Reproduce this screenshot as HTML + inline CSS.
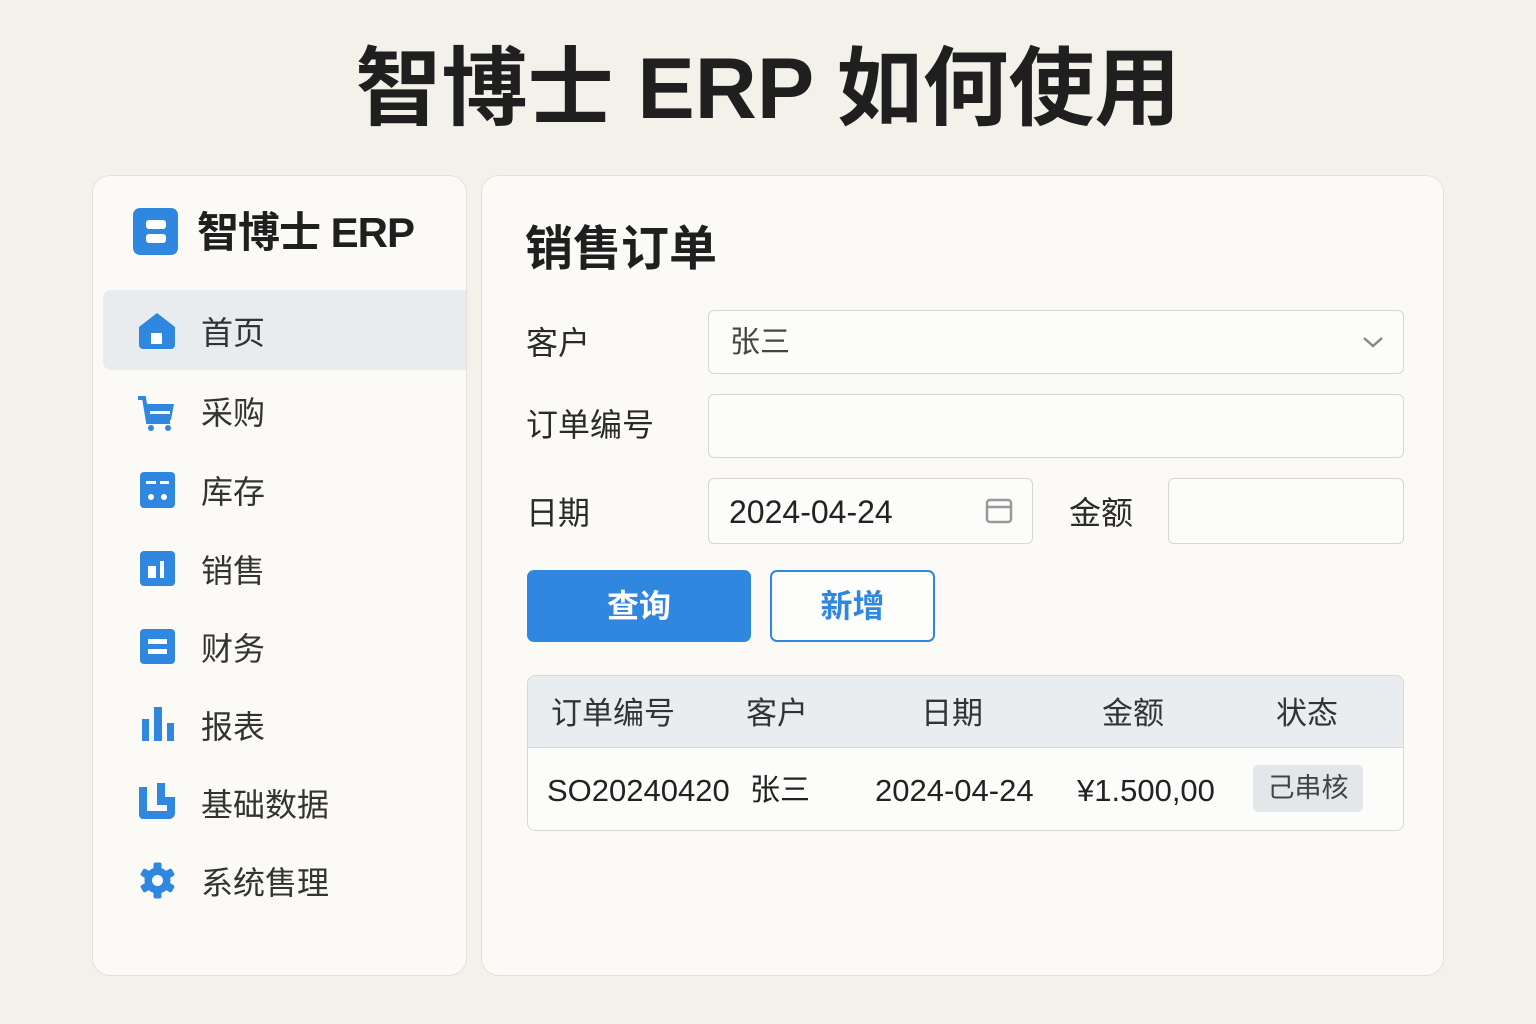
<!DOCTYPE html>
<html><head><meta charset="utf-8"><style>
*{margin:0;padding:0;box-sizing:border-box}
body{width:1536px;height:1024px;background:#f4f1eb;font-family:"Liberation Sans","Noto Sans CJK SC",sans-serif;color:#222;position:relative;overflow:hidden}
.a{position:absolute;white-space:nowrap}
.card{position:absolute;background:#fbfaf6;border:1.5px solid #e4e1da;border-radius:18px}
.lbl{font-size:32px;color:#2a2a2a;line-height:1}
.inp{position:absolute;border:1.5px solid #d6d6d6;border-radius:6px;background:#fcfcfa}
.mi{font-size:32px;color:#333;line-height:1}
.ic{position:absolute}
</style></head><body>
<div class="a" style="left:0;width:1536px;text-align:center;top:44px;font-size:86px;font-weight:bold;color:#1f1f1f;line-height:1.05;letter-spacing:0px">智博士 ERP 如何使用</div>

<div class="card" style="left:92px;top:175px;width:375px;height:801px"></div>
<div class="ic" style="left:133px;top:208px;width:45px;height:47px;background:#2f87e0;border-radius:7px"></div>
<div class="ic" style="left:146px;top:220px;width:20px;height:9px;background:#fff;border-radius:3px"></div>
<div class="ic" style="left:146px;top:234px;width:20px;height:9px;background:#fff;border-radius:3px"></div>
<div class="a" style="left:197px;top:210px;font-size:42px;font-weight:bold;line-height:1.1;color:#1f1f1f;letter-spacing:-1px">智博士 ERP</div>

<div class="ic" style="left:103px;top:290px;width:363px;height:80px;background:#e9ecee;border-radius:8px 0 0 8px"></div>
<svg class="ic" style="left:136px;top:311px" width="42" height="40" viewBox="0 0 42 40"><path d="M21 2 L39 16 V34 a4 4 0 0 1-4 4 H7 a4 4 0 0 1-4-4 V16 Z" fill="#2f87e0"/><rect x="15" y="22" width="11" height="11" fill="#fff"/></svg>
<svg class="ic" style="left:136px;top:394px" width="42" height="38" viewBox="0 0 42 38"><path d="M2 4 H8 L12 28 H34" fill="none" stroke="#2f87e0" stroke-width="4"/><path d="M10 10 H38 L35 26 H13Z" fill="#2f87e0"/><rect x="14" y="17" width="20" height="3" fill="#fff"/><circle cx="15" cy="34" r="3" fill="#2f87e0"/><circle cx="32" cy="34" r="3" fill="#2f87e0"/></svg>
<svg class="ic" style="left:140px;top:472px" width="35" height="36" viewBox="0 0 35 36"><rect width="35" height="36" rx="4" fill="#2f87e0"/><rect x="6" y="9" width="10" height="3" fill="#fff"/><rect x="20" y="9" width="9" height="3" fill="#fff"/><circle cx="11" cy="25" r="3" fill="#fff"/><circle cx="24" cy="25" r="3" fill="#fff"/></svg>
<svg class="ic" style="left:140px;top:551px" width="35" height="35" viewBox="0 0 35 35"><rect width="35" height="35" rx="4" fill="#2f87e0"/><rect x="8" y="15" width="8" height="12" fill="#fff"/><rect x="20" y="10" width="4" height="17" fill="#fff"/></svg>
<svg class="ic" style="left:140px;top:629px" width="35" height="35" viewBox="0 0 35 35"><rect width="35" height="35" rx="4" fill="#2f87e0"/><rect x="8" y="10" width="19" height="5" fill="#fff"/><rect x="8" y="20" width="19" height="5" fill="#fff"/></svg>
<svg class="ic" style="left:142px;top:707px" width="33" height="34" viewBox="0 0 33 34"><rect x="0" y="12" width="7" height="22" fill="#2f87e0"/><rect x="12" y="0" width="8" height="34" fill="#2f87e0"/><rect x="25" y="16" width="7" height="18" fill="#2f87e0"/></svg>
<svg class="ic" style="left:139px;top:783px" width="38" height="38" viewBox="0 0 38 38"><path d="M0 4 H8 V28 H28 V22 H18 V14 H36 V30 a6 6 0 0 1-6 6 H4 a4 4 0 0 1-4-4Z M18 0 H26 V14 H18Z" fill="#2f87e0"/></svg>
<svg class="ic" style="left:139px;top:862px" width="37" height="37" viewBox="-18.5 -18.5 37 37"><g fill="#2f87e0"><circle r="13"/><rect x="-4" y="-18" width="8" height="36" rx="2"/><rect x="-4" y="-18" width="8" height="36" rx="2" transform="rotate(60)"/><rect x="-4" y="-18" width="8" height="36" rx="2" transform="rotate(120)"/></g><circle r="5.5" fill="#fff"/></svg>

<div class="a mi" style="left:201px;top:317px">首页</div>
<div class="a mi" style="left:201px;top:397px">采购</div>
<div class="a mi" style="left:201px;top:476px">库存</div>
<div class="a mi" style="left:201px;top:555px">销售</div>
<div class="a mi" style="left:201px;top:633px">财务</div>
<div class="a mi" style="left:201px;top:711px">报表</div>
<div class="a mi" style="left:201px;top:789px">基础数据</div>
<div class="a mi" style="left:201px;top:867px">系统售理</div>

<div class="card" style="left:481px;top:175px;width:963px;height:801px"></div>
<div class="a" style="left:525px;top:224px;font-size:48px;font-weight:bold;line-height:1.1;color:#1f1f1f">销售订单</div>
<div class="a lbl" style="left:526px;top:327px">客户</div>
<div class="a lbl" style="left:526px;top:409px">订单编号</div>
<div class="a lbl" style="left:526px;top:497px">日期</div>
<div class="inp" style="left:708px;top:310px;width:696px;height:64px"></div>
<div class="a" style="left:730px;top:328px;font-size:30px;color:#444;line-height:1">张三</div>
<svg class="ic" style="left:1362px;top:335px" width="22" height="14" viewBox="0 0 22 14"><path d="M2 3 L11 11 L20 3" fill="none" stroke="#888" stroke-width="2.5"/></svg>
<div class="inp" style="left:708px;top:394px;width:696px;height:64px"></div>
<div class="inp" style="left:708px;top:478px;width:325px;height:66px"></div>
<div class="a" style="left:729px;top:496px;font-size:32px;color:#222;line-height:1">2024-04-24</div>
<svg class="ic" style="left:985px;top:497px" width="28" height="28" viewBox="0 0 28 28"><rect x="2" y="3" width="24" height="22" rx="3" fill="none" stroke="#999" stroke-width="2.5"/><line x1="2" y1="10" x2="26" y2="10" stroke="#999" stroke-width="2.5"/></svg>
<div class="a lbl" style="left:1069px;top:497px">金额</div>
<div class="inp" style="left:1168px;top:478px;width:236px;height:66px"></div>
<div class="a" style="left:527px;top:570px;width:224px;height:72px;background:#2f87e0;border-radius:7px;color:#fff;font-size:32px;font-weight:bold;text-align:center;line-height:72px">查询</div>
<div class="a" style="left:770px;top:570px;width:165px;height:72px;border:2px solid #2f87e0;border-radius:7px;color:#2f87e0;font-size:32px;font-weight:bold;text-align:center;line-height:68px;background:#fdfdfb">新增</div>

<div class="a" style="left:527px;top:675px;width:877px;height:156px;border:1.5px solid #d8d8d8;border-radius:8px;background:#fcfcfa;overflow:hidden"><div style="height:72px;background:#e9edf0;border-bottom:1.5px solid #d8d8d8"></div></div>
<div class="a" style="left:551px;top:698px;font-size:31px;color:#333;line-height:1">订单编号</div>
<div class="a" style="left:746px;top:698px;font-size:31px;color:#333;line-height:1">客户</div>
<div class="a" style="left:921px;top:698px;font-size:31px;color:#333;line-height:1">日期</div>
<div class="a" style="left:1102px;top:698px;font-size:31px;color:#333;line-height:1">金额</div>
<div class="a" style="left:1276px;top:698px;font-size:31px;color:#333;line-height:1">状态</div>
<div class="a" style="left:547px;top:775px;font-size:31px;color:#222;line-height:1">SO20240420</div>
<div class="a" style="left:750px;top:776px;font-size:30px;color:#222;line-height:1">张三</div>
<div class="a" style="left:875px;top:775px;font-size:31px;color:#222;line-height:1">2024-04-24</div>
<div class="a" style="left:1077px;top:775px;font-size:31px;color:#222;line-height:1">¥1.500,00</div>
<div class="a" style="left:1253px;top:765px;width:110px;height:47px;background:#e4e7ea;border-radius:5px;text-align:center;line-height:47px;font-size:27px;color:#444">己串核</div>
</body></html>
